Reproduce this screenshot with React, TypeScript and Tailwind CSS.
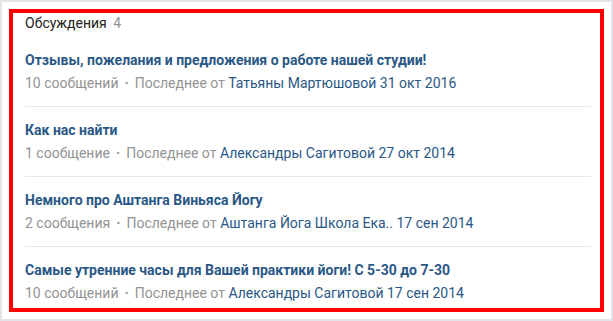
import { type FC } from 'react';

interface Topic {
    title: string;
    count: string;
    author: string;
    date: string;
}

const topics: Topic[] = [
    { title: 'Отзывы, пожелания и предложения о работе нашей студии!', count: '10 сообщений', author: 'Татьяны Мартюшовой', date: '31 окт 2016' },
    { title: 'Как нас найти', count: '1 сообщение', author: 'Александры Сагитовой', date: '27 окт 2014' },
    { title: 'Немного про Аштанга Виньяса Йогу', count: '2 сообщения', author: 'Аштанга Йога Школа Ека..', date: '17 сен 2014' },
    { title: 'Самые утренние часы для Вашей практики йоги! С 5-30 до 7-30', count: '10 сообщений', author: 'Александры Сагитовой', date: '17 сен 2014' },
];

const TopicRow: FC<{ topic: Topic }> = ({ topic }) => (
    <div className="pt-[14px] pb-[14px] last:pb-[4px]">
        <div className="text-[14px] leading-[18px] font-bold text-[#2a5885]">{topic.title}</div>
        <div className="mt-[5px] text-[14px] leading-[18px] text-[#939393]">
            <span>{topic.count}</span>
            <span className="mx-[6px] font-bold">·</span>
            <span>Последнее от </span>
            <span className="text-[#2a5885]">{topic.author} {topic.date}</span>
        </div>
    </div>
);

export default function App() {
    return (
        <div className="w-[613px] h-[321px] bg-[#e3e4e8] p-[2px] font-['Roboto',sans-serif]">
            <div className="h-full bg-white p-[7px]">
                <div className="h-full border-4 border-[#ff0000] pl-[12px] pr-[9px] pt-[1px]">
                    {/* Header */}
                    <div className="text-[14px] leading-[18px] text-[#222222] mb-[5px]">
                        Обсуждения <span className="ml-[3px] text-[#939393]">4</span>
                    </div>
                    <div className="flex flex-col divide-y divide-[#e7e8ec]">
                        {topics.map((t, i) => (
                            <TopicRow key={i} topic={t} />
                        ))}
                    </div>
                </div>
            </div>
        </div>
    );
}
